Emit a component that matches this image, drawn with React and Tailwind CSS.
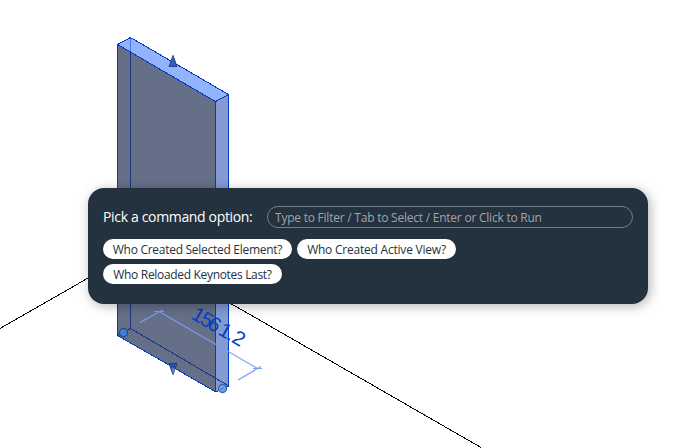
const options = [
  { label: "Who Created Selected Element?", width: "w-[189px]", tracking: "tracking-[-0.28px]" },
  { label: "Who Created Active View?", width: "w-[159px]", tracking: "tracking-[-0.22px]" },
  { label: "Who Reloaded Keynotes Last?", width: "w-[179px]", tracking: "tracking-[-0.32px]" },
];

function ModelView() {
  return (
    <svg className="absolute inset-0" width="682" height="448" viewBox="0 0 682 448" fill="none">
      <g stroke="#000" shapeRendering="crispEdges">
        <path d="M0 328.5L130 254M229 302.5L481 447.5" />
      </g>
      <path d="M117.5 44.5L216 101.5V392L117.5 335.5Z" fill="#656f88" />
      <path d="M117.5 44.5L130.5 37.5L228.5 94.5L216 101.5Z" fill="#94b3ff" />
      <path d="M216 101.5L228.5 94.5V386L216 392Z" fill="#839ad2" />
      <g shapeRendering="crispEdges">
        <path d="M130.5 52V328.5L228 385.5M130.5 328.5L117.5 335.5" stroke="#173585" />
        <path d="M130.5 38V52" stroke="#477be9" />
        <path d="M117.5 44.5L130.5 37.5L228.5 94.5V386L216 392L117.5 335.5ZM117.5 44.5L215.5 101.5V392M215.5 101.5L228.5 94.5" stroke="#003bc4" />
      </g>
      <g stroke="#7b9cfa" strokeWidth="1.2">
        <path d="M159 311.5L257.5 368.5M140 322.5L162.5 310M238 380L261 366.5M154 311.5H164M253 368.5H262" />
      </g>
      <text
        transform="translate(189.2 317.6) rotate(30)"
        x="1 10.8 19.8 32.2 42.3 47.8"
        fill="#003fc7"
        fontSize="20.5"
        fontFamily="Liberation Sans, Arial, sans-serif"
      >
        1561.2
      </text>
      <path d="M173 55.5L177 66.5H169Z" fill="#2d5dcc" stroke="#26427c" />
      <path d="M173 55L174.5 60H171.5Z" fill="#4a5c80" />
      <path d="M173 374.5L177 363.5H169Z" fill="#2851ad" stroke="#253b70" />
      <path d="M173 374L175 369L171.5 367.5Z" fill="#6689cf" />
      <circle cx="123.5" cy="332.5" r="4" fill="#4184dc" stroke="#294b78" strokeWidth="1.3" />
      <circle cx="222.5" cy="388.5" r="4" fill="#69a4f5" stroke="#44668f" strokeWidth="1.3" />
      <path d="M121.5 333.7L125.5 331.3M220.5 389.7L224.5 387.3" stroke="#3474d2" />
    </svg>
  );
}

export default function App() {
  return (
    <main className="relative h-[448px] w-[682px] overflow-hidden bg-white font-['Open_Sans','Noto_Sans',sans-serif]">
      <ModelView />
      <section className="absolute left-[88px] top-[188px] h-[116px] w-[560px] rounded-2xl bg-[#24313e] px-[15px] pt-[18px] shadow-[2px_2px_12px_rgba(0,0,0,0.3)]">
        <div className="flex h-[22px] items-center">
          <label htmlFor="filter" className="w-[164px] shrink-0 whitespace-nowrap text-[14px] leading-[22px] tracking-[-0.34px] text-white">
            Pick a command option:
          </label>
          <input
            id="filter"
            placeholder="Type to Filter / Tab to Select / Enter or Click to Run"
            className="h-[22px] w-[366px] rounded-full border border-[#757e84] bg-transparent px-[7px] pt-px text-[12px] tracking-[-0.23px] text-white outline-none placeholder:text-[#a1a5a9]"
          />
        </div>
        <div className="mt-[11px] flex flex-wrap gap-[5px] pr-40">
          {options.map((o) => (
            <button key={o.label} className={`h-5 whitespace-nowrap rounded-full bg-white pt-px text-center text-[12px] leading-5 text-[#24313e] ${o.width} ${o.tracking}`}>
              {o.label}
            </button>
          ))}
        </div>
      </section>
    </main>
  );
}
